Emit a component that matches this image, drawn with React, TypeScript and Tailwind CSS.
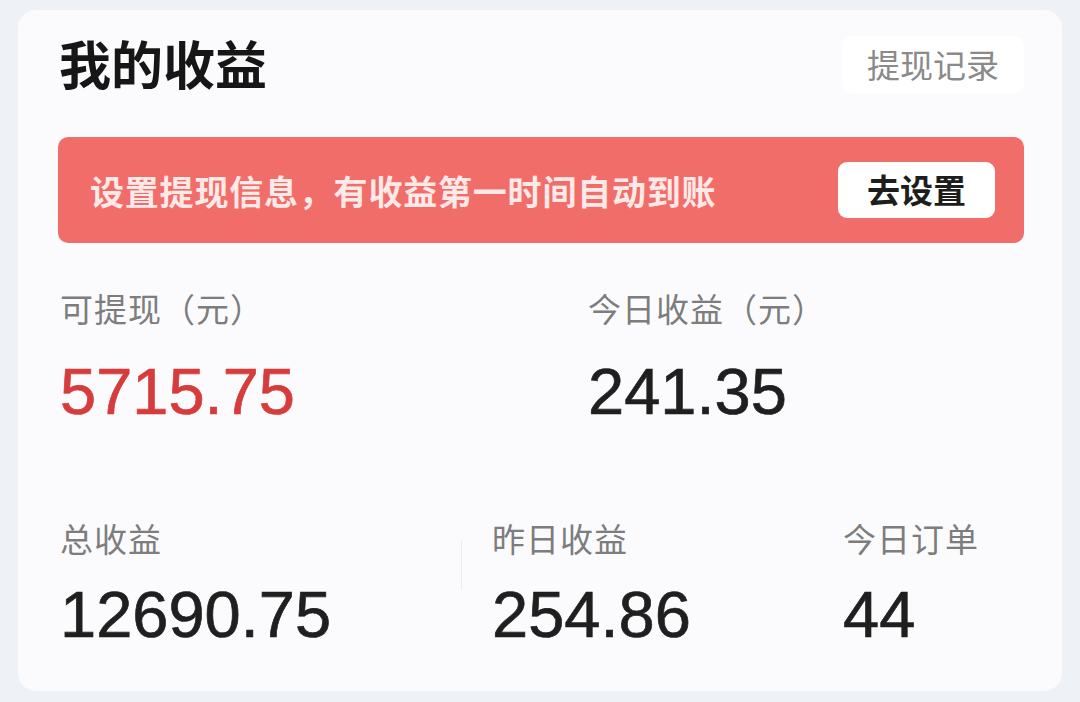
import React from "react";

const cjk = "font-['Noto_Sans_CJK_SC','Noto_Sans',sans-serif]";
const num = "font-['Liberation_Sans','Arial',sans-serif] text-[65px] leading-[70px] [-webkit-text-stroke:0.7px_currentColor]";
const lbl = `${cjk} text-[33px] leading-[40px] tracking-[1px] text-[#7d7d7d]`;

function Stat({ label, value, red }: { label: string; value: string; red?: boolean }) {
  return (
    <div className="flex flex-col">
      <div className={lbl}>{label}</div>
      <div className={`${num} mt-[29px] ${red ? "text-[#d63c3c]" : "text-[#1f1f1f]"}`}>{value}</div>
    </div>
  );
}

export default function App() {
  return (
    <div className="w-[1080px] h-[702px] bg-[#eef1f6] px-[18px] pt-[10px] pb-[11px]">
      <div className="h-full rounded-[18px] bg-[#fbfbfd] pl-[40px] pr-[38px] pt-[26px]">
        <div className="flex items-center justify-between h-[57px]">
          <div className={`${cjk} text-[52px] font-bold leading-[57px] text-[#161616] pl-[1px] -mt-[4px]`}>我的收益</div>
          <div
            className={`${cjk} flex h-[57px] w-[182px] items-center justify-center rounded-[10px] bg-white text-[33px] text-[#8a8a8a]`}
          >
            提现记录
          </div>
        </div>

        <div className="mt-[44px] flex h-[106px] items-center justify-between rounded-[10px] bg-[#f16d69] pl-[32px] pr-[29px]">
          <div className={`${cjk} text-[34px] font-bold tracking-[0.8px] text-[#fde9e7]`}>
            设置提现信息，有收益第一时间自动到账
          </div>
          <div
            className={`${cjk} flex h-[56px] w-[157px] items-center justify-center rounded-[9px] bg-white text-[33px] font-bold text-[#1d1d1d]`}
          >
            去设置
          </div>
        </div>

        <div className="mt-[45px] grid grid-cols-[528px_1fr] pl-[2px]">
          <Stat label="可提现（元）" value="5715.75" red />
          <Stat label="今日收益（元）" value="241.35" />
        </div>

        <div className="mt-[91px] flex pl-[2px]">
          <div className="w-[401px]">
            <div className={lbl}>总收益</div>
            <div className={`${num} mt-[22px] text-[#1f1f1f]`}>12690.75</div>
          </div>
          <div className="w-[31px] flex">
            <div className="mt-[22px] h-[50px] w-px bg-[#ececec]" />
          </div>
          <div className="w-[351px]">
            <div className={lbl}>昨日收益</div>
            <div className={`${num} mt-[22px] text-[#1f1f1f]`}>254.86</div>
          </div>
          <div>
            <div className={lbl}>今日订单</div>
            <div className={`${num} mt-[22px] text-[#1f1f1f]`}>44</div>
          </div>
        </div>
      </div>
    </div>
  );
}
